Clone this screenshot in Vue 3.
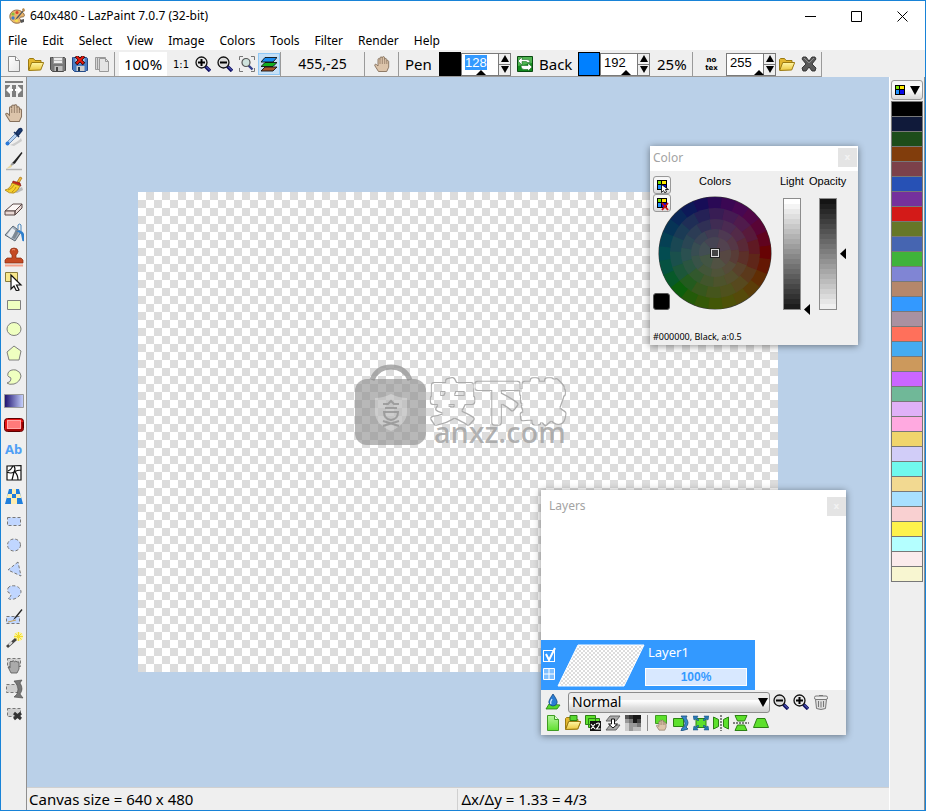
<script setup>
import { reactive, ref } from 'vue'

const menus = ['File', 'Edit', 'Select', 'View', 'Image', 'Colors', 'Tools', 'Filter', 'Render', 'Help']

const fileActions = [
  ['New', 'new'],
  ['Open', 'open'],
  ['Save', 'save'],
  ['Save as', 'saveas'],
  ['Duplicate', 'copy'],
]

const tools = [
  ['Dock', 'dock'],
  ['Hand', 'handbig'],
  ['Color picker', 'picker'],
  ['Pen', 'brush'],
  ['Clone brush', 'broom'],
  ['Eraser', 'eraser'],
  ['Flood fill', 'bucket'],
  ['Stamp', 'stamp'],
  ['Edit shape', 'editshape'],
  ['Rectangle', 'rect'],
  ['Ellipse', 'ellipse'],
  ['Polygon', 'polygon'],
  ['Spline', 'spline'],
  ['Gradient', 'gradient'],
  ['Phong shape', 'phong'],
  ['Text', 'text'],
  ['Deformation', 'deform'],
  ['Texture mapping', 'texmap'],
  ['Select rectangle', 'selrect'],
  ['Select ellipse', 'selellipse'],
  ['Select polygon', 'selpoly'],
  ['Select spline', 'selspline'],
  ['Selection pen', 'selpen'],
  ['Magic wand', 'wand'],
  ['Move selection', 'selmove'],
  ['Rotate selection', 'selrotate'],
  ['Deselect', 'deselect'],
]

const layerActions = [
  ['New layer', 'laynew'],
  ['Open as layer', 'layopen'],
  ['Duplicate layer', 'laydup'],
  ['Merge down', 'laymerge'],
  ['Rasterise', 'layraster'],
]

const layerTransforms = [
  ['Move layer', 'laymove'],
  ['Rotate layer', 'layrotate'],
  ['Zoom layer', 'layzoom'],
  ['Flip horizontally', 'layfliph'],
  ['Flip vertically', 'layflipv'],
  ['Layer mapping', 'laymap'],
]

const palette = [
  '#000000', '#101a3a', '#1d4d1a', '#813d0c', '#7c414a', '#2751b5', '#75319d', '#d31a18',
  '#667728', '#4665b1', '#3fb33a', '#8085d4', '#b5876b', '#3399ff', '#a991a1', '#ff705b',
  '#45abf0', '#cc995c', '#cb66ff', '#70b898', '#e0b1f8', '#ffa9e0', '#f0d56c', '#d1cdf8',
  '#70f8ed', '#f2d991', '#a8e0ff', '#f9d0d1', '#fef24c', '#b4ffff', '#fbebec', '#f8f6d1',
]

const alpha = reactive({ pen: 128, back: 192, texture: 255 })
const step = (key, delta) => {
  alpha[key] = Math.min(255, Math.max(0, Number(alpha[key]) + delta))
}
const marker = (value) => ({ left: Math.round((value / 255) * 27) + 'px' })

const light = ref(0)
const opacity = ref(128)
const blend = ref('Normal')
const visible = ref(true)

// Hard-edged grey ramps behind the two vertical sliders
const ramp = (from, to) => {
  const n = 22
  const stops = []
  for (let i = 0; i < n; i++) {
    const v = Math.round(from + ((to - from) * i) / (n - 1))
    stops.push(`rgb(${v},${v},${v}) ${((i * 100) / n).toFixed(2)}% ${(((i + 1) * 100) / n).toFixed(2)}%`)
  }
  return `linear-gradient(${stops.join(',')})`
}
const lightRamp = ramp(255, 28)
const opacityRamp = ramp(20, 240)

// Dark hue wheel, built from banded ring segments
const hues = [
  [0, 104, 0, 0], [25, 92, 0, 45], [55, 76, 4, 82], [85, 48, 4, 84], [110, 14, 12, 88],
  [140, 4, 42, 88], [180, 0, 76, 82], [205, 4, 86, 54], [222, 4, 96, 8], [245, 40, 90, 6],
  [275, 70, 86, 4], [305, 88, 72, 8], [335, 98, 38, 0], [360, 104, 0, 0],
]
const hueAt = (deg) => {
  const d = (deg + 360) % 360
  const i = hues.findIndex((h, k) => k > 0 && d <= h[0])
  const a = hues[i - 1]
  const b = hues[i]
  const t = (d - a[0]) / (b[0] - a[0])
  return [1, 2, 3].map((k) => a[k] + (b[k] - a[k]) * t)
}
const wheel = []
const radii = [56, 45, 34, 24, 16]
const sizes = [15, 20, 24, 36, 60]
radii.forEach((r, ring) => {
  const s = Math.pow(r / 56, 1.2) * (ring === 0 ? 0.96 : 0.9)
  const size = sizes[ring]
  const shift = ring * 5 - 7
  for (let a = 0; a < 360; a += size) {
    const mid = hueAt(a + shift + size / 2)
    const c = mid.map((v) => Math.round(82 + (v - 82) * s))
    const p = (deg) => {
      const rad = (deg * Math.PI) / 180
      return `${(57 + r * Math.cos(rad)).toFixed(1)} ${(57 - r * Math.sin(rad)).toFixed(1)}`
    }
    wheel.push({
      d: `M57 57L${p(a + shift)}A${r} ${r} 0 0 0 ${p(a + shift + size + 0.6)}Z`,
      fill: `rgb(${c.join(',')})`,
    })
  }
})
</script>

<template>
  <div class="window">
    <svg class="defs" aria-hidden="true">
      <defs>
        <linearGradient id="g-grad" x1="0" x2="1" y1="0" y2="0">
          <stop offset="0" stop-color="#1c0f6e" /><stop offset="1" stop-color="#c9d4ff" />
        </linearGradient>
        <linearGradient id="g-folder" x1="0" x2="0" y1="0" y2="1">
          <stop offset="0" stop-color="#fff7a8" /><stop offset="1" stop-color="#ecc63c" />
        </linearGradient>
        <linearGradient id="g-page" x1="0" x2="1" y1="0" y2="1">
          <stop offset="0" stop-color="#ffffff" /><stop offset="1" stop-color="#e6e6e6" />
        </linearGradient>
        <linearGradient id="g-green" x1="0" x2="0" y1="0" y2="1">
          <stop offset="0" stop-color="#b8f5a0" /><stop offset="1" stop-color="#5fe030" />
        </linearGradient>
        <pattern id="tiny-check" width="4" height="4" patternUnits="userSpaceOnUse">
          <rect width="4" height="4" fill="#fff" />
          <path d="M0 0h2v2h-2zM2 2h2v2h-2z" fill="#dcdcdc" />
        </pattern>
        <filter id="outline" x="-5%" y="-10%" width="110%" height="120%">
          <feMorphology in="SourceGraphic" operator="erode" radius="1" result="inner" />
          <feComposite in="SourceGraphic" in2="inner" operator="out" />
        </filter>
      </defs>
      <symbol id="i-app" viewBox="0 0 16 16">
        <path d="M8 2C3 2 0 6 1 10s5 6 9 5c3-1 2-3 1-4s0-2 2-2 3-1 2-3-4-4-7-4z" fill="#e9b56c" stroke="#7b5a35" stroke-width=".8" />
        <circle cx="4" cy="6" r="1.6" fill="#8bbf3a" /><circle cx="8" cy="4.500" r="1.500" fill="#d8402c" />
        <circle cx="4" cy="10" r="1.700" fill="#3d7cc9" /><circle cx="7.500" cy="12.500" r="1.600" fill="#f5df4a" />
        <path d="M15 1L8 9l-2 3 3-2 6.500-8z" fill="#4c5560" /><path d="M13 1l2-1 1 3-2 1z" fill="#b98a4a" />
        <path d="M11 12l4-1v3l-3 1z" fill="#555" />
      </symbol>
      <symbol id="i-new" viewBox="0 0 16 16">
        <path d="M2.500 .5h7l4 4v11h-11z" fill="url(#g-page)" stroke="#8a8a8a" /><path d="M9.500 .5v4h4" fill="#fff" stroke="#8a8a8a" />
      </symbol>
      <symbol id="i-open" viewBox="0 0 16 16">
        <path d="M.5 14V3.500l1-1h4l1.500 2h6v3" fill="#e3b62e" stroke="#9b7a12" />
        <path d="M.7 14.500l3-8h12l-3 7.500z" fill="url(#g-folder)" stroke="#9b7a12" />
      </symbol>
      <symbol id="i-save" viewBox="0 0 16 16">
        <path d="M1.500 1.500h13l1 1v12h-1l-1 1h-11l-2-2v-12z" fill="#787878" stroke="#4a4a4a" />
        <path d="M3.500 1.500h9v6h-9z" fill="#eee" stroke="#999" /><path d="M4 4.500h8" stroke="#bbb" />
        <path d="M4.500 10h8v5h-8z" fill="#bdbdbd" /><path d="M6 11h2v4h-2z" fill="#444" />
      </symbol>
      <symbol id="i-saveas" viewBox="0 0 16 16">
        <path d="M1.500 1.500h13l1 1v12h-1l-1 1h-11l-2-2v-12z" fill="#4a7cc4" stroke="#244a86" />
        <path d="M3.500 1.500h9v6h-9z" fill="#c9daf2" /><path d="M4.500 10h8v5h-8z" fill="#cfcfcf" /><path d="M6 11h2v4h-2z" fill="#234" />
        <path d="M4 0l8 8M12 0l-8 8" stroke="#200" stroke-width="3.600" /><path d="M4.500 .5l7 7M11.500 .5l-7 7" stroke="#e81a10" stroke-width="2" />
      </symbol>
      <symbol id="i-copy" viewBox="0 0 16 16">
        <path d="M1.500 1.500h8v12h-8z" fill="#d6d6d6" stroke="#999" /><path d="M3.500 1.500h8v12h-8z" fill="#d6d6d6" stroke="#999" />
        <path d="M5.500 2.500h6l3 3v10h-9z" fill="#e4e4e4" stroke="#999" /><path d="M11.500 2.500v3h3" fill="none" stroke="#999" />
      </symbol>
      <symbol id="i-zoomin" viewBox="0 0 16 16">
        <path d="M10 10l5 5" stroke="#101060" stroke-width="3.400" /><path d="M11 10.500l4 4" stroke="#6a78e0" stroke-width="1" />
        <circle cx="6.500" cy="6.500" r="5.500" fill="#e8e8e8" stroke="#111" stroke-width="1.300" />
        <path d="M3 6.500h7M6.500 3v7" stroke="#000" stroke-width="2" />
      </symbol>
      <symbol id="i-zoomout" viewBox="0 0 16 16">
        <path d="M10 10l5 5" stroke="#101060" stroke-width="3.400" /><path d="M11 10.500l4 4" stroke="#6a78e0" stroke-width="1" />
        <circle cx="6.500" cy="6.500" r="5.500" fill="#dcdcdc" stroke="#111" stroke-width="1.300" />
        <path d="M3 6.500h7" stroke="#000" stroke-width="2" />
      </symbol>
      <symbol id="i-zoomfit" viewBox="0 0 16 16">
        <path d="M.5 4V.5H4M12 .5h3.500V4M15.500 12v3.500H12M4 15.500H.5V12" fill="none" stroke="#777" />
        <path d="M9.500 9.500l4 4" stroke="#33408a" stroke-width="2.400" />
        <circle cx="7" cy="6.500" r="4" fill="#cfe3dd" stroke="#555" stroke-width="1.200" />
      </symbol>
      <symbol id="i-stack" viewBox="0 0 16 16">
        <path d="M4 11h12l-4 4H0z" fill="#a8542c" stroke="#111" stroke-width=".9" />
        <path d="M4 6.500h12l-4 4H0z" fill="#12b020" stroke="#111" stroke-width=".9" />
        <path d="M4 1.500h12l-4 4.500H0z" fill="#1a8cf0" stroke="#111" stroke-width=".9" />
      </symbol>
      <symbol id="i-hand" viewBox="0 0 16 16">
        <path d="M4.500 15.500L1 10c-1-1.500 .6-2.300 1.500-1.400L4 10V3.500c0-1.300 1.800-1.300 2 0V2c0-1.500 2.200-1.500 2.300 0v-.5c.2-1.300 2.200-1.200 2.300 .3v1.500c.3-1.300 2-1 2.200 .3v1.500c.3-1 1.900-.8 1.900 .6v5.500l-2 4.300z" fill="#dcc4aa" stroke="#85705c" stroke-width=".9" />
        <path d="M6 4v4M8.300 2v6M10.700 3v5M12.800 5v3" stroke="#8f7863" stroke-width=".8" />
      </symbol>
      <symbol id="i-swap" viewBox="0 0 16 16">
        <path d="M.5 .5h15v15H.5z" fill="#138a1e" stroke="#0a4a12" /><path d="M1 1h14v6L1 10z" fill="#4fb452" />
        <path d="M1 5l4-4v2.500h5q3 0 3 3h-3q0-1-1-1H5V9z" fill="#fff" stroke="#0c5a14" stroke-width=".5" />
        <path d="M15 11l-4-4v2.500H4q0 4 3 4h4V15z" fill="#fff" stroke="#0c5a14" stroke-width=".5" />
      </symbol>
      <symbol id="i-cross" viewBox="0 0 16 16">
        <path d="M2 1h3l3 4 3-4h3l1 2-4 5 4 4-1 3h-3l-3-4-3 4H2l-1-3 4-4-4-5z" fill="#5a5a5a" stroke="#2c2c2c" stroke-width=".9" />
        <path d="M3 2l5 5 5-5" fill="none" stroke="#999" stroke-width=".8" />
      </symbol>
      <symbol id="i-grid4" viewBox="0 0 16 16">
        <path d="M3 3h10v10H3z" fill="#000" /><path d="M4 4h3v3H4z" fill="#7be000" /><path d="M8 4h4v3H8z" fill="#ffe800" />
        <path d="M4 8h3v4H4z" fill="#1e90ff" /><path d="M8 8h4v4H8z" fill="#0808e8" />
      </symbol>
      <symbol id="i-palload" viewBox="0 0 16 16">
        <use href="#i-grid4" width="16" height="16" /><path d="M7.500 7.500v8l2-2 1.500 2.500 1.500-1-1-2.500h3z" fill="#fff" stroke="#000" stroke-width=".8" />
      </symbol>
      <symbol id="i-paldel" viewBox="0 0 16 16">
        <use href="#i-grid4" width="16" height="16" /><path d="M8 8l6 7M14 8l-6 7" stroke="#c81010" stroke-width="1.800" />
      </symbol>

      <symbol id="i-dock" viewBox="0 0 20 20">
        <path d="M1 2h18v2H1zM1 6h5v12H1zM8 6h4v12H8zM14 6h5v12h-5z" fill="#7e7e7e" />
        <path d="M2 11l4-4v3h3v2H6v3zM18 11l-4-4v3h-3v2h3v3z" fill="#fff" />
      </symbol>
      <symbol id="i-handbig" viewBox="0 0 20 20"><use href="#i-hand" x="1" y="1" width="18" height="18" /></symbol>
      <symbol id="i-picker" viewBox="0 0 20 20">
        <path d="M6 18q8-3 11-7l1 3-8 5z" fill="#ccc" /><path d="M3 17l1-3 8-8 2 2-8 8-3 2z" fill="#b8d4f4" stroke="#5a7ca8" stroke-width=".8" />
        <circle cx="3.500" cy="16.500" r="2" fill="#2a78d8" /><path d="M10 5l5 5M12 6l3-4q3-1.500 3 1.500L14.500 8z" fill="#1f3f78" stroke="#16305e" stroke-width="1.500" />
      </symbol>
      <symbol id="i-brush" viewBox="0 0 20 20">
        <path d="M2 18.500h16" stroke="#b4b4b4" stroke-width="1.500" /><path d="M17.500 1L10 10l-2 2 1 1.500 2-1L18.500 2z" fill="#222" />
        <path d="M8.500 11l1.500 2-3 2.500-1-1z" fill="#999" /><path d="M7 13.500L2 18l5-1.500 1-1z" fill="#e8d8a0" />
      </symbol>
      <symbol id="i-broom" viewBox="0 0 20 20">
        <path d="M8 17l10-5 1 3-6 3z" fill="#bbb" /><path d="M13 7l3-5 2 1-3 5z" fill="#f0b83a" stroke="#a87818" stroke-width=".7" />
        <path d="M9 6l7 2 1 3-9-2z" fill="#c82818" stroke="#7a1810" stroke-width=".6" />
        <path d="M8 8l8 3q-2 5-6 7-5 1-9-3 5-1 7-7z" fill="#f6cf2c" stroke="#a8801a" stroke-width=".8" /><path d="M4 15q4-1 6-5M8 17q3-2 4-5" fill="none" stroke="#c09018" />
      </symbol>
      <symbol id="i-eraser" viewBox="0 0 20 20">
        <path d="M1 12l8-7h9l-7 7z" fill="#fbf6f4" stroke="#5c4a48" /><path d="M1 12v4h10v-4zM11 12l7-7v4l-7 7z" fill="#e8d8d4" stroke="#5c4a48" />
      </symbol>
      <symbol id="i-bucket" viewBox="0 0 20 20">
        <path d="M9 3l8 6-6 9-10-6z" fill="#a8b4c0" stroke="#5e6a76" /><path d="M8 5l4 3-5 7-4-3z" fill="#e8edf2" />
        <path d="M12 6l3 2-4 8-3-1z" fill="#7c8894" /><path d="M14 6V2q2-2 3 0v6" fill="none" stroke="#4a86bc" /><path d="M12 8q6-2 8 3v7q-2 1-2-2l-1-5q-2-2-5-3z" fill="#2f7fcc" />
      </symbol>
      <symbol id="i-stamp" viewBox="0 0 20 20">
        <path d="M1 18.500h18" stroke="#f4a088" stroke-width="2" /><path d="M10 1q4 0 4 3.500Q14 6 12 8v3h5l2 2v3H1v-3l2-2h5V8Q6 6 6 4.500 6 1 10 1z" fill="#c44a24" stroke="#8a2c10" stroke-width=".7" />
        <path d="M8 3q2-1 3 0" stroke="#f09878" fill="none" />
      </symbol>
      <symbol id="i-editshape" viewBox="0 0 20 20">
        <path d="M1.500 1.500h12v9h-12z" fill="#f8e88c" stroke="#8a7c3c" /><path d="M7 4v14l3-3 2.500 5 2.500-1-2.500-5H17z" fill="#fff" stroke="#111" stroke-width="1.200" />
      </symbol>
      <symbol id="i-rect" viewBox="0 0 20 20"><path d="M3.500 5.500h13v9h-13z" fill="#efffc0" stroke="#7f7f7f" /></symbol>
      <symbol id="i-ellipse" viewBox="0 0 20 20"><ellipse cx="10" cy="10" rx="7" ry="6.500" fill="#efffc0" stroke="#7f7f7f" /></symbol>
      <symbol id="i-polygon" viewBox="0 0 20 20"><path d="M10 3l7 5-2 9H5L3 9z" fill="#efffc0" stroke="#7f7f7f" /></symbol>
      <symbol id="i-spline" viewBox="0 0 20 20"><path d="M4 6q2-4 8-3 5 2 5 6-1 6-7 8-5 1-7-1 4-1 4-4 0-2-2-2-2-1-1-4z" fill="#efffc0" stroke="#7f7f7f" /></symbol>
      <symbol id="i-gradient" viewBox="0 0 20 20"><path d="M.5 3.500h19v13H.5z" fill="url(#g-grad)" stroke="#9a9a9a" /></symbol>
      <symbol id="i-phong" viewBox="0 0 20 20">
        <rect x=".5" y="3.500" width="19" height="13" rx="3" fill="#e81414" stroke="#5c0000" /><rect x="3.500" y="5.500" width="13" height="8" fill="#ff7a7a" stroke="#ffa8a8" />
        <path d="M2 15h15q2-1 1-8" fill="none" stroke="#8c0000" stroke-width="1.500" />
      </symbol>
      <symbol id="i-deform" viewBox="0 0 20 20">
        <path d="M3 3h14v14H3z" fill="#fff" />
        <path d="M3 3l14-.5v14.500H3zM3 9q4 2 7 0t7-2M10 3q2 3 0 6l-2 8M11 9q3 3 3 8M4 8q3-1 5-5" fill="none" stroke="#111" stroke-width="1.200" />
      </symbol>
      <symbol id="i-texmap" viewBox="0 0 20 20">
        <path d="M5 2h10l4 15H1z" fill="#1f7edc" /><path d="M8 2h4v5H8zM3.700 7H8v4H2.600zM12 7h4.300l1 4H12zM7 11h6v6H7z" fill="#ffedb0" />
      </symbol>
      <symbol id="i-selrect" viewBox="0 0 20 20"><path d="M3.500 6.500h13v8h-13z" class="sel" /></symbol>
      <symbol id="i-selellipse" viewBox="0 0 20 20"><ellipse cx="10" cy="10" rx="6.500" ry="6" class="sel" /></symbol>
      <symbol id="i-selpoly" viewBox="0 0 20 20"><path d="M14 3L4 11l13 6z" class="sel" /></symbol>
      <symbol id="i-selspline" viewBox="0 0 20 20"><path d="M4 5q2-3 8-2 5 2 5 6-1 5-7 7-5 1-6-1 3-1 3-3 0-2-2-2-2-1-1-5z" class="sel" /></symbol>
      <symbol id="i-selpen" viewBox="0 0 20 20">
        <path d="M2.500 9.500h13v7h-13z" class="sel" /><path d="M17.500 2L11 10l-2 3 3-2 6.500-8z" fill="#222" /><path d="M4 15l8-2" stroke="#c8a050" />
      </symbol>
      <symbol id="i-wand" viewBox="0 0 20 20">
        <circle cx="14.500" cy="5.500" r="4.500" fill="#fbf29a" /><path d="M14.500 1v9M10 5.500h9M11.500 2.500l6 6M17.500 2.500l-6 6" stroke="#f2dc30" />
        <path d="M3 16l9-8" stroke="#444" stroke-width="3" /><path d="M5 14l3-3" stroke="#ddd" stroke-width="2" />
      </symbol>
      <symbol id="i-selmove" viewBox="0 0 20 20">
        <path d="M3.500 3.500h13v8h-13z" class="sel grey" /><path d="M7 18l-3-6 2 1V7q1-2 2 0 1-3 2.500 0 1.500-2 2.500 0 2-1 2 1v6l-2 4z" fill="#aaa" stroke="#555" stroke-width=".8" />
      </symbol>
      <symbol id="i-selrotate" viewBox="0 0 20 20">
        <path d="M2.500 5.500h12v8h-12z" class="sel grey" /><path d="M10 2l8-1-2 3q4 6 0 11l3 4-9-1 3-3q2-5 0-9z" fill="#777" stroke="#444" stroke-width=".6" />
      </symbol>
      <symbol id="i-deselect" viewBox="0 0 20 20">
        <path d="M3.500 5.500h13v8h-13z" class="sel grey" /><path d="M10 10l7 6M17 10l-7 6" stroke="#333" stroke-width="3" />
      </symbol>

      <symbol id="i-drop" viewBox="0 0 16 16">
        <path d="M1 15l3-5 11 1-3 4z" fill="#54d82c" stroke="#277a10" stroke-width=".8" /><path d="M8 0q5 7 4 9-1 3-4 3t-4-3q-1-2 4-9z" fill="#2a7cd4" stroke="#14477e" stroke-width=".8" />
        <path d="M7 5q-2 3-1 5" stroke="#cfe6ff" stroke-width="1.300" fill="none" />
      </symbol>
      <symbol id="i-trash" viewBox="0 0 16 16">
        <path d="M2.500 5l1 9.500q4.500 2 9 0l1-9.500z" fill="#dedede" stroke="#777" /><rect x="1.500" y="2" width="13" height="3.500" rx="1.500" fill="#eee" stroke="#777" />
        <path d="M6 1.500h4M5.500 7v6M8 7.500v6M10.500 7v6" stroke="#777" />
      </symbol>
      <symbol id="i-laynew" viewBox="0 0 16 16"><path d="M2.500 .5h7l4 4v11h-11z" fill="url(#g-green)" stroke="#3f9c22" /><path d="M9.500 .5v4h4" fill="#e0ffd4" stroke="#3f9c22" /></symbol>
      <symbol id="i-layopen" viewBox="0 0 16 16"><use href="#i-open" width="16" height="16" /><path d="M5 .5h7v5H5z" fill="#58d830" stroke="#2c8014" /><path d="M.7 14.500l3-8h12l-3 7.500z" fill="url(#g-folder)" stroke="#9b7a12" /></symbol>
      <symbol id="i-laydup" viewBox="0 0 16 16">
        <path d="M.5 .5h10v9H.5zM3.500 3.500h11v9h-11z" fill="#5de02c" stroke="#2c8014" /><path d="M5 6h11v10H5z" fill="#111" />
        <path d="M6 9l4 5M10 9l-4 5M11 9q3-2 3.500 0 0 2-3 5h4" fill="none" stroke="#fff" stroke-width="1.200" />
      </symbol>
      <symbol id="i-laymerge" viewBox="0 0 16 16">
        <path d="M5 1h10l-4 5H1zM5 10h10l-4 5H1z" fill="#aaa" stroke="#666" /><path d="M6.500 4h3v5h3L8 13 3.500 9h3z" fill="#fff" stroke="#111" />
      </symbol>
      <symbol id="i-layraster" viewBox="0 0 16 16">
        <path d="M0 0h16v16H0z" fill="#999" /><path d="M0 0h4v4H0z" fill="#555" /><path d="M4 0h4v4H4z" fill="#333" /><path d="M8 0h8v4H8zM8 4h4v4H8z" fill="#181818" /><path d="M12 4h4v4h-4z" fill="#444" />
        <path d="M4 4h4v4H4z" fill="#777" /><path d="M0 8h4v8H0z" fill="#ccc" /><path d="M8 12h8v4H8z" fill="#bbb" /><path d="M12 8h4v4h-4z" fill="#777" />
      </symbol>
      <symbol id="i-laymove" viewBox="0 0 16 16"><path d="M2.500 .5h11v8h-11z" fill="#5de02c" stroke="#3f9c22" /><use href="#i-hand" x="3" y="4" width="11" height="12" /></symbol>
      <symbol id="i-layrotate" viewBox="0 0 16 16"><path d="M.5 3.500h10v8H.5z" fill="#5de02c" stroke="#2c8014" /><path d="M8 1h6l-1 2q4 5 0 9l2 2-7 2 1-3 2-1q2-4 0-7z" fill="#3888c8" stroke="#164c7c" stroke-width=".8" /></symbol>
      <symbol id="i-layzoom" viewBox="0 0 16 16"><path d="M3 3.500h10v9H3z" fill="#5de02c" stroke="#2c8014" /><path d="M0 1h5L4 3l2 2-1 1-2-2-2 1zM16 1h-5l1 2-2 2 1 1 2-2 2 1zM0 15h5l-1-2 2-2-1-1-2 2-2-1zM16 15h-5l1-2-2-2 1-1 2 2 2-1z" fill="#2878b4" stroke="#124a78" stroke-width=".5" /></symbol>
      <symbol id="i-layfliph" viewBox="0 0 16 16"><path d="M.5 2l5 2.500v7L.5 14zM15.500 2l-5 2.500v7l5 2.500z" fill="#5de02c" stroke="#2c8014" /><path d="M8 0v16" stroke="#111" stroke-dasharray="2 1" /></symbol>
      <symbol id="i-layflipv" viewBox="0 0 16 16"><path d="M2 .5h12L11.500 6h-7zM2 15.500h12L11.500 10h-7z" fill="#5de02c" stroke="#2c8014" /><path d="M0 8h16" stroke="#111" stroke-dasharray="2 1" /></symbol>
      <symbol id="i-laymap" viewBox="0 0 16 16"><path d="M4 3.500h8l3.500 9H.5z" fill="#5de02c" stroke="#2c8014" /></symbol>
    </svg>

    <header class="titlebar">
      <svg class="icon"><use href="#i-app" /></svg>
      <h1>640x480 - LazPaint 7.0.7 (32-bit)</h1>
      <div class="caption-buttons">
        <button aria-label="Minimize"><svg viewBox="0 0 11 11"><path d="M0 5.500h11" /></svg></button>
        <button aria-label="Maximize"><svg viewBox="0 0 11 11"><path d="M.5 .5h10v10H.5z" /></svg></button>
        <button aria-label="Close"><svg viewBox="0 0 11 11"><path d="M.5 .5l10 10M10.500 .5l-10 10" /></svg></button>
      </div>
    </header>

    <nav class="menubar">
      <button v-for="m in menus" :key="m">{{ m }}</button>
    </nav>

    <div class="toolbar-row">
      <div class="toolbar">
        <div class="group files">
          <button v-for="[label, icon] in fileActions" :key="icon" class="tool" :aria-label="label">
            <svg class="icon"><use :href="'#i-' + icon" /></svg>
          </button>
        </div>
        <div class="group">
          <output class="zoom">100%</output>
          <button class="tool one">1:1</button>
          <button class="tool" aria-label="Zoom in"><svg class="icon"><use href="#i-zoomin" /></svg></button>
          <button class="tool" aria-label="Zoom out"><svg class="icon"><use href="#i-zoomout" /></svg></button>
          <button class="tool" aria-label="Fit"><svg class="icon"><use href="#i-zoomfit" /></svg></button>
          <button class="tool active" aria-label="Layers"><svg class="icon"><use href="#i-stack" /></svg></button>
        </div>
        <div class="group coords">455,-25</div>
        <div class="group grab">
          <button class="tool" aria-label="Hand"><svg class="icon"><use href="#i-hand" /></svg></button>
        </div>
        <div class="group colors">
          <label class="name" for="pen">Pen</label>
          <button class="swatch pen" aria-label="Pen color"></button>
          <div class="spin">
            <div class="field">
              <input id="pen" v-model="alpha.pen" class="picked" type="text" />
              <i class="mark" :style="marker(alpha.pen)"></i>
            </div>
            <div class="arrows">
              <button aria-label="More" @click="step('pen', 1)"><i class="up"></i></button>
              <button aria-label="Less" @click="step('pen', -1)"><i class="down"></i></button>
            </div>
          </div>
          <button class="tool swap" aria-label="Swap colors"><svg class="icon"><use href="#i-swap" /></svg></button>
          <label class="name back" for="back">Back</label>
          <button class="swatch blue" aria-label="Back color"></button>
          <div class="spin">
            <div class="field">
              <input id="back" v-model="alpha.back" type="text" />
              <i class="mark" :style="marker(alpha.back)"></i>
            </div>
            <div class="arrows">
              <button aria-label="More" @click="step('back', 1)"><i class="up"></i></button>
              <button aria-label="Less" @click="step('back', -1)"><i class="down"></i></button>
            </div>
          </div>
          <span class="percent">25%</span>
        </div>
        <div class="group texture">
          <button class="tool tex" aria-label="No texture"><span>no</span><span>tex</span></button>
          <div class="spin">
            <div class="field">
              <input v-model="alpha.texture" type="text" aria-label="Texture opacity" />
              <i class="mark" :style="marker(alpha.texture)"></i>
            </div>
            <div class="arrows">
              <button aria-label="More" @click="step('texture', 1)"><i class="up"></i></button>
              <button aria-label="Less" @click="step('texture', -1)"><i class="down"></i></button>
            </div>
          </div>
          <button class="tool" aria-label="Load texture"><svg class="icon"><use href="#i-open" /></svg></button>
          <button class="tool" aria-label="Remove texture"><svg class="icon"><use href="#i-cross" /></svg></button>
        </div>
      </div>
    </div>

    <div class="main">
      <aside class="toolbox">
        <button v-for="[label, icon] in tools" :key="icon" :aria-label="label">
          <span v-if="icon === 'text'" class="ab">Ab</span>
          <svg v-else><use :href="'#i-' + icon" /></svg>
        </button>
      </aside>

      <section class="center">
        <div class="workspace">
          <div class="canvas">
            <svg class="mark-art" viewBox="0 0 224 96">
              <path d="M22 16Q27 3 41 3t19 13" fill="none" stroke="#9a9a9a" stroke-opacity=".8" stroke-width="5" />
              <rect x="5" y="15" width="71" height="66" rx="12" fill="#8c8c8c" fill-opacity=".62" />
              <path d="M41 30q8 4 16 4v14q0 12-16 19-16-7-16-19V34q8 0 16-4z" fill="#fff" fill-opacity=".3" />
              <path d="M33 40h5l3-3 3 3h5M35 44h12M34 48h14q0 7-7 8-7-1-7-8zM33 62l16-5M33 57l16 5" fill="none" stroke="#8c8c8c" stroke-opacity=".7" stroke-width="2" />
              <text class="mark-cjk" x="80" y="55" filter="url(#outline)">安下载</text>
              <text class="mark-latin" x="84" y="79">anxz.com</text>
            </svg>
          </div>

          <div class="panel color-panel">
            <div class="panel-title"><h2>Color</h2><button class="close" aria-label="Close color">x</button></div>
            <div class="color-body">
              <div class="side">
                <button class="bevel" aria-label="Load palette"><svg class="icon"><use href="#i-palload" /></svg></button>
                <button class="bevel" aria-label="Clear palette"><svg class="icon"><use href="#i-paldel" /></svg></button>
                <button class="current" aria-label="Current color"></button>
              </div>
              <div class="wheel-box">
                <span>Colors</span>
                <svg class="wheel" viewBox="0 0 114 114">
                  <circle cx="57" cy="57" r="56.500" fill="#3c3c3c" />
                  <path v-for="(w, i) in wheel" :key="i" :d="w.d" :fill="w.fill" />
                  <rect x="53.500" y="53.500" width="7" height="7" fill="none" stroke="#222" stroke-width="3" />
                  <rect x="53.500" y="53.500" width="7" height="7" fill="#444" stroke="#ddd" />
                </svg>
              </div>
              <div class="slider">
                <label for="light">Light</label>
                <input id="light" v-model="light" class="light" type="range" min="0" max="255" />
              </div>
              <div class="slider wide">
                <label for="opacity">Opacity</label>
                <input id="opacity" v-model="opacity" class="opacity" type="range" min="0" max="255" />
              </div>
            </div>
            <p class="color-info">#000000, Black, a:0.5</p>
          </div>

          <div class="panel layers-panel">
            <div class="panel-title"><h2>Layers</h2><button class="close" aria-label="Close layers">x</button></div>
            <div class="layer-list">
              <div class="layer">
                <div class="flags">
                  <label class="check">
                    <input v-model="visible" type="checkbox" aria-label="Layer visible" />
                    <svg viewBox="0 0 14 16"><path v-if="visible" d="M3 7l3 6 6-12" /></svg>
                  </label>
                  <button aria-label="Tile layer"><svg viewBox="0 0 12 12"><path d="M.5 .5h11v11H.5zM6 .5v11M.5 6h11" /></svg></button>
                </div>
                <svg class="thumb" viewBox="0 0 88 43"><path d="M21 1h66L67 42H1z" fill="url(#tiny-check)" stroke="#fff" /></svg>
                <div class="layer-text">
                  <span>Layer1</span>
                  <button class="layer-opacity">100%</button>
                </div>
              </div>
            </div>
            <div class="layer-tools">
              <div class="line">
                <button class="tool20" aria-label="Blend"><svg class="icon"><use href="#i-drop" /></svg></button>
                <div class="combo">
                  <select v-model="blend" aria-label="Blend mode">
                    <option>Normal</option>
                    <option>Multiply</option>
                  </select>
                  <i class="caret"></i>
                </div>
                <button class="tool20" aria-label="Zoom out layers"><svg class="icon"><use href="#i-zoomout" /></svg></button>
                <button class="tool20" aria-label="Zoom in layers"><svg class="icon"><use href="#i-zoomin" /></svg></button>
                <button class="tool20" aria-label="Delete layer"><svg class="icon"><use href="#i-trash" /></svg></button>
              </div>
              <div class="line">
                <button v-for="[label, icon] in layerActions" :key="icon" class="tool20" :aria-label="label">
                  <svg class="icon"><use :href="'#i-' + icon" /></svg>
                </button>
                <i class="divider"></i>
                <button v-for="[label, icon] in layerTransforms" :key="icon" class="tool20" :aria-label="label">
                  <svg class="icon"><use :href="'#i-' + icon" /></svg>
                </button>
              </div>
            </div>
          </div>
        </div>

        <footer class="status">
          <span>Canvas size = 640 x 480</span>
          <span>Δx/Δy = 1.33 = 4/3</span>
        </footer>
      </section>

      <aside class="palette">
        <button class="bevel palette-menu" aria-label="Palette menu">
          <svg class="icon"><use href="#i-grid4" /></svg><i class="caret"></i>
        </button>
        <div class="chips">
          <button v-for="c in palette" :key="c" :aria-label="c" :style="{ background: c }"></button>
        </div>
      </aside>
    </div>
  </div>
</template>

<style>
body {
  margin: 0;
}
</style>

<style scoped>
* {
  box-sizing: border-box;
}
button {
  border: 0;
  padding: 0;
  background: none;
  color: inherit;
  font: inherit;
}
h1,
h2,
p {
  margin: 0;
  font-weight: 400;
}
.defs {
  position: absolute;
  width: 0;
  height: 0;
}
.window {
  display: flex;
  flex-direction: column;
  min-height: 100vh;
  border: 1px solid #1883d7;
  background: #fff;
  color: #000;
  font: 15px/20px "Noto Sans", sans-serif;
}
.icon {
  display: block;
  width: 16px;
  height: 16px;
}
.titlebar {
  display: flex;
  align-items: center;
  height: 30px;
  padding-left: 8px;
  gap: 5px;
}
.titlebar h1 {
  flex: 1;
  font-size: 12px;
}
.caption-buttons {
  display: flex;
}
.caption-buttons button {
  display: grid;
  place-items: center;
  width: 46px;
  height: 29px;
}
.caption-buttons svg {
  width: 11px;
  height: 11px;
  fill: none;
  stroke: #000;
}
.menubar {
  display: flex;
  height: 19px;
  padding-left: 7px;
  gap: 15px;
  font-size: 12px;
}
.toolbar-row {
  height: 27px;
  background: #efefef;
}
.toolbar {
  display: flex;
  width: max-content;
  height: 27px;
  padding: 2px 0 0 2px;
  border-bottom: 1px solid #9a9a9a;
}
.group {
  display: flex;
  align-items: center;
  height: 24px;
  border-right: 1px solid #9a9a9a;
}
.group.files {
  width: 112px;
}
.tool {
  display: grid;
  place-items: center;
  flex: none;
  width: 22px;
  height: 22px;
}
.tool.active {
  background: #c6e0f6;
  border: 1px solid #90c8f6;
}
.zoom {
  width: 48px;
  height: 24px;
  margin: 0 3px 0 4px;
  background: #fff;
  text-align: center;
  line-height: 24px;
}
.tool.one {
  font: 10px "DejaVu Sans", sans-serif;
}
.coords {
  width: 84px;
  justify-content: center;
  font-size: 14px;
}
.grab {
  width: 34px;
  padding-left: 6px;
}
.colors {
  width: 294px;
  padding-left: 6px;
}
.name {
  width: 34px;
}
.name.back {
  width: 39px;
}
.swatch {
  width: 22px;
  height: 24px;
  border: 1px solid #000;
}
.swatch.pen {
  background: #000;
}
.swatch.blue {
  background: #0080ff;
}
.spin {
  display: flex;
  width: 50px;
  height: 23px;
  border: 1px solid #7a7a7a;
}
.field {
  position: relative;
  width: 37px;
  background: #fff;
}
.field input {
  display: block;
  width: 22px;
  height: 15px;
  margin: 1px 0 0 3px;
  padding: 0;
  border: 0;
  background: #fff;
  font: 13px/15px "Liberation Sans", sans-serif;
}
.field input.picked {
  background: #3399ff;
  color: #fff;
}
.mark {
  position: absolute;
  bottom: 0;
  border: solid transparent;
  border-width: 0 5px 5px;
  border-bottom-color: #000;
}
.arrows {
  display: flex;
  flex-direction: column;
  width: 12px;
  border-left: 1px solid #7a7a7a;
}
.arrows button {
  display: grid;
  place-items: center;
  flex: 1;
}
.arrows button + button {
  border-top: 1px solid #7a7a7a;
}
.up,
.down {
  border: solid transparent;
}
.up {
  border-width: 0 4px 7px;
  border-bottom-color: #000;
}
.down {
  border-width: 7px 4px 0;
  border-top-color: #000;
}
.swap {
  width: 28px;
}
.percent {
  margin-left: 7px;
}
.texture {
  width: 129px;
  padding-left: 4px;
}
.tool.tex {
  width: 29px;
  align-content: center;
  font: bold 7px/8px "DejaVu Sans", sans-serif;
}
.main {
  display: flex;
  flex: 1;
  background: #efefef;
}
.toolbox {
  display: flex;
  flex-direction: column;
  width: 26px;
  border-right: 1px solid #8f8f8f;
}
.toolbox button {
  display: grid;
  place-items: center;
  height: 24px;
}
.toolbox svg {
  width: 20px;
  height: 20px;
}
.sel {
  fill: #c0d6ff;
  stroke: #777;
  stroke-dasharray: 3 2;
}
.sel.grey {
  fill: #d0d0d0;
}
.ab {
  color: #4f9ff5;
  font: bold 13px/20px "Noto Sans", sans-serif;
}
.center {
  display: flex;
  flex-direction: column;
  flex: 1;
  min-width: 0;
}
.workspace {
  position: relative;
  display: flex;
  align-items: center;
  justify-content: center;
  flex: 1;
  background: #bad0e8;
}
.canvas {
  width: 640px;
  height: 480px;
  padding: 172px 0 0 212px;
  background: repeating-conic-gradient(#dcdcdc 0 25%, #fff 0 50%) 0 0 / 16px 16px;
}
.mark-art {
  display: block;
  width: 224px;
  height: 96px;
}
.mark-cjk {
  fill: #acacac;
  stroke: #acacac;
  stroke-width: 6px;
  stroke-linejoin: round;
  stroke-linecap: round;
  font: 500 45px "Noto Sans CJK SC", sans-serif;
}
.mark-latin {
  fill: #a4a4a4;
  fill-opacity: 0.85;
  font: 500 29px "Noto Sans", sans-serif;
}
.status {
  display: flex;
  height: 23px;
  padding-top: 1px;
  border-top: 1px solid #d0d0d0;
}
.status span {
  flex: 1;
  padding-left: 2px;
}
.status span + span {
  border-left: 1px solid #d0d0d0;
  padding-left: 4px;
}
.palette {
  width: 36px;
  padding: 3px 1px 0;
  border-left: 1px solid #fff;
  border-right: 1px solid #8f8f8f;
}
.bevel {
  border: 1px solid #999;
  border-radius: 3px;
  background: linear-gradient(#f4f4f4, #fff 45%, #d8d8d8);
}
.palette-menu {
  display: flex;
  align-items: center;
  width: 32px;
  height: 20px;
  gap: 2px;
}
.caret {
  border: solid transparent;
  border-width: 9px 5px 0;
  border-top-color: #000;
}
.chips {
  display: grid;
  gap: 1px;
  width: 32px;
  margin-top: 1px;
  padding: 1px;
  background: #787878;
}
.chips button {
  height: 14px;
}
.panel {
  position: absolute;
  background: #efefef;
  box-shadow: 0 1px 7px rgba(0, 0, 0, 0.45);
}
.panel-title {
  display: flex;
  align-items: center;
  justify-content: space-between;
  background: #fff;
}
.panel-title h2 {
  color: #a3a3a3;
  font-size: 12px;
}
.close {
  width: 19px;
  height: 19px;
  background: #e4e4e4;
  color: #f2f2f2;
  font: bold 9px/19px "DejaVu Sans", sans-serif;
}
.color-panel {
  top: 69px;
  left: 623px;
  width: 208px;
}
.color-panel .panel-title {
  height: 25px;
  padding: 0 1px 2px 3px;
}
.color-body {
  display: flex;
  height: 145px;
  padding: 4px 0 0 3px;
  font: 11px/12px "Liberation Sans", sans-serif;
}
.side {
  z-index: 1;
  display: flex;
  flex-direction: column;
  width: 18px;
  height: 134px;
  margin-top: 1px;
}
.side .bevel {
  display: grid;
  place-items: center;
  width: 18px;
  height: 18px;
}
.current {
  width: 17px;
  height: 17px;
  margin-top: auto;
  border: 1px solid #555;
  border-radius: 3px;
  background: #000;
}
.wheel-box {
  display: flex;
  flex-direction: column;
  align-items: center;
  width: 114px;
  margin-left: -13px;
  gap: 9px;
}
.wheel {
  flex: none;
  width: 114px;
  height: 114px;
}
.slider {
  display: flex;
  flex-direction: column;
  align-items: flex-start;
  width: 28px;
  margin-left: 8px;
  gap: 6px;
}
.slider.wide {
  width: 38px;
  margin-left: 1px;
}
.slider input {
  width: 28px;
  height: 122px;
  margin: 0 0 0 3px;
  appearance: none;
  writing-mode: vertical-lr;
  direction: rtl;
  background-color: transparent;
  background-repeat: no-repeat;
  background-position: 1px 6px, 0 5px;
  background-size: 16px 110px, 18px 112px;
}
.slider.wide input {
  margin-left: 10px;
}
.light {
  background-image: v-bind(lightRamp), linear-gradient(#8c8c8c, #8c8c8c);
}
.opacity {
  background-image: v-bind(opacityRamp), linear-gradient(#8c8c8c, #8c8c8c);
}
.slider input::-webkit-slider-thumb {
  appearance: none;
  width: 6px;
  height: 11px;
  margin-left: 20px;
  background: #000;
  clip-path: polygon(0 50%, 100% 0, 100% 100%);
}
.color-info {
  padding: 14px 0 1px 3px;
  font-size: 9px;
  line-height: 14px;
}
.layers-panel {
  top: 413px;
  left: 514px;
  width: 305px;
}
.layers-panel .panel-title {
  height: 32px;
  padding-left: 8px;
}
.layer-list {
  display: flex;
  align-items: flex-end;
  height: 168px;
  background: #fff;
}
.layer {
  display: flex;
  align-items: center;
  width: 214px;
  height: 50px;
  padding-left: 2px;
  background: #3399ff;
}
.flags {
  display: grid;
  gap: 5px;
  width: 14px;
  padding-bottom: 3px;
}
.check {
  position: relative;
  display: grid;
  height: 16px;
}
.check input {
  width: 12px;
  height: 12px;
  margin: 3px 0 0;
  appearance: none;
  border: 1px solid #fff;
}
.check svg {
  position: absolute;
  top: 0;
  left: 0;
  width: 14px;
  height: 16px;
  fill: none;
  stroke: #fff;
  stroke-width: 2;
}
.flags button {
  width: 12px;
  height: 12px;
}
.flags button svg {
  display: block;
  fill: #80c0ff;
  stroke: #fff;
}
.thumb {
  width: 88px;
  height: 43px;
}
.layer-text {
  display: grid;
  gap: 7px;
  width: 102px;
  padding-bottom: 1px;
  color: #fff;
  font-size: 13px;
  line-height: 18px;
}
.layer-text span {
  padding-left: 3px;
}
.layer-opacity {
  height: 18px;
  border: 1px solid #fff;
  background: #d8e8ff;
  color: #3399ff;
  font: bold 12px/16px "Liberation Sans", sans-serif;
}
.layer-tools {
  display: grid;
  gap: 1px;
  padding: 2px 0 2px 2px;
}
.line {
  display: flex;
  align-items: center;
  height: 20px;
}
.tool20 {
  display: grid;
  place-items: center;
  width: 20px;
  height: 20px;
}
.combo {
  position: relative;
  width: 202px;
  margin: 0 1px 0 5px;
}
.combo select {
  display: block;
  width: 100%;
  height: 21px;
  padding: 0 3px;
  appearance: none;
  border: 1px solid #8c8c8c;
  border-radius: 3px;
  background: linear-gradient(#ececec, #ececec 35%, #fff 40%, #dcdcdc 80%, #d0d0d0);
  color: #000;
  font: 14px/18px "Noto Sans", sans-serif;
}
.combo .caret {
  position: absolute;
  top: 6px;
  right: 2px;
}
.divider {
  width: 1px;
  height: 16px;
  margin: 0 3px 0 4px;
  background: #8c8c8c;
}
</style>
